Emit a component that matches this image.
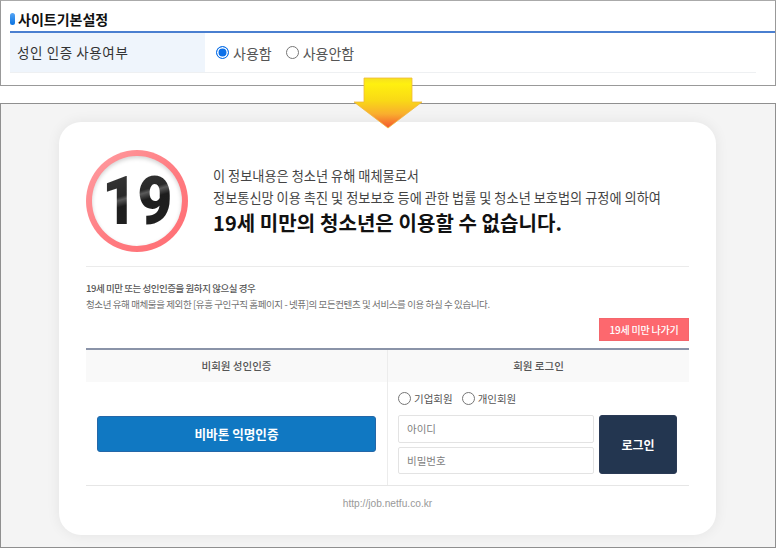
<div class="page">
  <section class="settings">
    <h2><i class="bullet"></i>사이트기본설정</h2>
    <div class="row">
      <div class="label">성인 인증 사용여부</div>
      <div class="opts">
        <label class="radio"><span class="dot on"></span>사용함</label>
        <label class="radio"><span class="dot"></span>사용안함</label>
      </div>
    </div>
  </section>

  <svg class="arrow" width="70" height="52" viewBox="0 0 70 52" aria-hidden="true">
    <defs>
      <linearGradient id="ag" x1="0" y1="0" x2="0" y2="1">
        <stop offset="0" stop-color="#f5e020"/>
        <stop offset="0.12" stop-color="#fff00f"/>
        <stop offset="0.45" stop-color="#f9d916"/>
        <stop offset="0.72" stop-color="#f9ae2e"/>
        <stop offset="1" stop-color="#f4552e"/>
      </linearGradient>
    </defs>
    <path d="M11 1H59V25H69L35 51L1 25H11Z" fill="url(#ag)" stroke="#f0b93a" stroke-width="0.8"/>
  </svg>

  <section class="stage">
    <div class="card">
      <div class="head">
        <div class="ring"><div class="badge"><span>19</span></div></div>
        <div class="msg">
          <p class="l1">이 정보내용은 청소년 유해 매체물로서</p>
          <p class="l2">정보통신망 이용 촉진 및 정보보호 등에 관한 법률 및 청소년 보호법의 규정에 의하여</p>
          <p class="l3">19세 미만의 청소년은 이용할 수 없습니다.</p>
        </div>
      </div>

      <div class="notice">
        <p class="n1">19세 미만 또는 성인인증을 원하지 않으실 경우</p>
        <p class="n2">청소년 유해 매체물을 제외한 [유흥 구인구직 홈페이지 - 넷퓨]의 모든컨텐츠 및 서비스를 이용 하실 수 있습니다.</p>
      </div>
      <div class="exit-wrap"><button class="exit">19세 미만 나가기</button></div>

      <div class="auth">
        <div class="col left">
          <div class="th">비회원 성인인증</div>
          <div class="td"><button class="vbtn">비바톤 익명인증</button></div>
        </div>
        <div class="col right">
          <div class="th">회원 로그인</div>
          <div class="td login">
            <div class="types">
              <label class="radio sm"><span class="dot"></span>기업회원</label>
              <label class="radio sm"><span class="dot"></span>개인회원</label>
            </div>
            <div class="form">
              <div class="inputs">
                <div class="input">아이디</div>
                <div class="input">비밀번호</div>
              </div>
              <button class="go">로그인</button>
            </div>
          </div>
        </div>
      </div>
      <div class="url">http://job.netfu.co.kr</div>
    </div>
  </section>
</div>

<style>
  :global(body) { margin: 0; background: #fff; }
  .page {
    position: relative;
    width: 780px;
    height: 549px;
    overflow: hidden;
    font-family: "Noto Sans CJK KR", "Noto Sans", sans-serif;
    color: #333;
  }
  p { margin: 0; }
  button { font-family: inherit; cursor: pointer; padding: 0; }

  .settings {
    box-sizing: border-box;
    width: 776px;
    height: 86px;
    border: 1px solid #999;
    border-top-color: #aaa;
    padding: 9px 0 0 9px;
    background: #fff;
  }
  h2 {
    display: flex;
    align-items: center;
    gap: 3px;
    margin: 0;
    box-sizing: content-box;
    height: 18px;
    padding-bottom: 3px;
    font-size: 14px;
    font-weight: 700;
    color: #111;
    border-bottom: 2px solid #4a7fd0;
  }
  .bullet {
    width: 5px;
    height: 12px;
    border-radius: 3px;
    background: linear-gradient(#55a5f5, #0a72e0);
  }
  .row { display: flex; height: 39px; margin-right: 19px; border-bottom: 1px solid #eef0f2; }
  .label {
    width: 188px;
    padding-left: 7px;
    background: #eff5fc;
    font-size: 13.5px;
    line-height: 38px;
    color: #333;
    letter-spacing: 0.6px;
  }
  .opts { display: flex; align-items: center; gap: 14px; padding-left: 11px; }
  .radio { display: flex; align-items: center; gap: 4px; font-size: 14px; color: #555; }
  .dot {
    box-sizing: border-box;
    width: 13px;
    height: 13px;
    border: 1px solid #767676;
    border-radius: 50%;
    background: #fff;
  }
  .dot.on { border: 1.5px solid #0b6fe8; box-shadow: inset 0 0 0 1.5px #fff; background: #0b6fe8; }

  .arrow { position: absolute; left: 353px; top: 77px; z-index: 2; }

  .stage {
    box-sizing: border-box;
    width: 776px;
    height: 445px;
    margin-top: 17px;
    border: 1px solid #8f8f8f;
    background: #f4f4f4;
    padding: 18px 0 0 58px;
  }
  .card {
    box-sizing: border-box;
    width: 657px;
    height: 413px;
    background: #fff;
    border-radius: 22px;
    box-shadow: 0 0 14px rgba(0,0,0,0.07);
    padding: 27px 27px 0 27px;
  }
  .head {
    display: flex;
    align-items: center;
    height: 117px;
    border-bottom: 1px solid #ebebeb;
  }
  .ring {
    box-sizing: border-box;
    flex: none;
    width: 102px;
    height: 102px;
    margin-top: -14px;
    padding: 6px;
    border-radius: 50%;
    background: linear-gradient(135deg, #ff9ea2, #ff7b80 55%, #ff6d73);
  }
  .badge {
    box-sizing: border-box;
    width: 90px;
    height: 90px;
    padding-top: 2px;
    border-radius: 50%;
    background: #fff;
    box-shadow: inset 0 2px 4px rgba(0,0,0,.18);
    display: flex;
    align-items: center;
    justify-content: center;
  }
  .badge span {
    display: block;
    font-family: "Roboto", "Liberation Sans", sans-serif;
    font-weight: 900;
    font-size: 66px;
    line-height: 1;
    letter-spacing: 0;
    transform: scaleX(0.92);
    background: linear-gradient(165deg, #3a3a3a 0, #2a2a2a 38%, #5a5a5a 42%, #1d1d1d 50%, #222 100%);
    -webkit-background-clip: text;
    background-clip: text;
    -webkit-text-fill-color: transparent;
  }
  .msg { margin: -13px 0 0 25px; }
  .l1, .l2 { font-size: 13.2px; line-height: 22px; color: #444; }
  .l3 { font-size: 20px; line-height: 28px; font-weight: 700; color: #111; letter-spacing: 0.08px; }

  .notice { padding-top: 14px; font-size: 9.5px; color: #707070; }
  .n1 { color: #555; font-weight: 500; letter-spacing: -0.45px; line-height: 15px; }
  .n2 { line-height: 14px; margin-top: 1px; letter-spacing: -0.4px; }
  .exit-wrap { display: flex; justify-content: flex-end; margin-top: 7px; }
  .exit {
    width: 90px;
    height: 23px;
    border: 1px solid #f4666c;
    background: #fd686e;
    color: #fff;
    font-size: 10px;
    letter-spacing: -0.2px;
    font-weight: 500;
  }
  .auth {
    display: flex;
    margin-top: 7px;
    border-top: 2px solid #8a93a8;
    border-bottom: 1px solid #e6e6e6;
    height: 135px;
  }
  .col { flex: 1 1 0; }
  .left { flex: 0 0 301px; border-right: 1px solid #ececec; }
  .th {
    height: 32px;
    background: #f9f9f9;
    text-align: center;
    font-size: 10.5px;
    line-height: 31px;
    color: #555;
    font-weight: 500;
  }
  .td { height: 103px; }
  .left .td { display: flex; align-items: center; justify-content: center; box-sizing: border-box; padding-bottom: 4px; }
  .vbtn {
    width: 279px;
    height: 36px;
    margin-top: 4px;
    border: 1px solid #2467a8;
    border-radius: 3px;
    background: #1078c2;
    color: #fff;
    font-size: 12.6px;
    font-weight: 700;
  }
  .login { padding: 0 0 0 10px; box-sizing: border-box; }
  .types { display: flex; gap: 9px; height: 33px; align-items: center; }
  .radio.sm { font-size: 10.5px; gap: 3px; color: #555; }
  .form { display: flex; gap: 5px; }
  .inputs { display: flex; flex-direction: column; gap: 4px; }
  .input {
    box-sizing: border-box;
    width: 196px;
    height: 27.5px;
    border: 1px solid #e3e3e3;
    border-radius: 2px;
    padding-left: 8px;
    font-size: 10.5px;
    line-height: 25px;
    color: #808080;
  }
  .go {
    width: 78px;
    height: 59px;
    border: 1px solid #2a3a55;
    border-radius: 3px;
    background: #233650;
    color: #fff;
    font-size: 12px;
    font-weight: 700;
  }
  .url { text-align: center; font-family: "Liberation Sans", sans-serif; font-size: 10.2px; color: #999; margin-top: 12px; }
</style>
